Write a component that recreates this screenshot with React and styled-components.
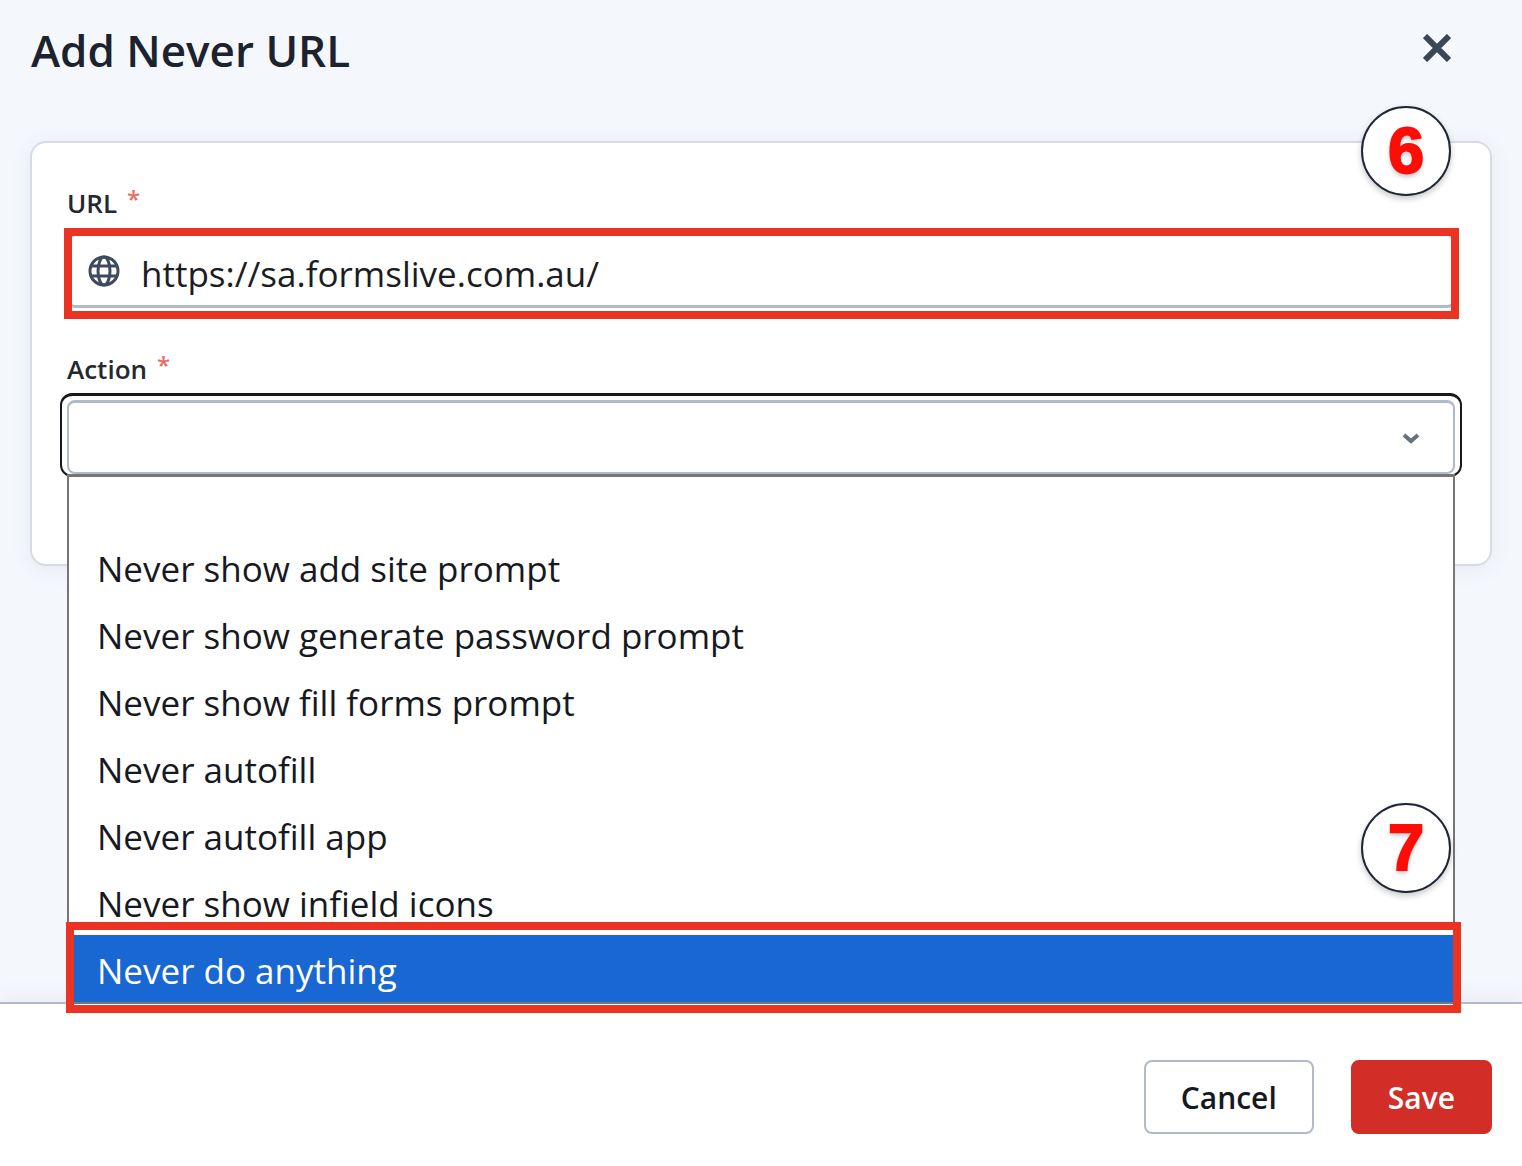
import React, { useState } from 'react';
import styled, { createGlobalStyle } from 'styled-components';

const GlobalStyle = createGlobalStyle`
  * {
    box-sizing: border-box;
  }
  body {
    margin: 0;
    background: #f4f7fc;
    color: #1a1d24;
    font-family: 'Open Sans', 'Noto Sans', sans-serif;
  }
  button, input, select {
    font-family: inherit;
    color: inherit;
  }
`;

const Dialog = styled.div`
  display: flex;
  flex-direction: column;
  min-height: 100vh;
`;

const Header = styled.header`
  display: flex;
  align-items: center;
  justify-content: space-between;
  height: 100px;
  padding: 0 63px 0 31px;
`;

const Title = styled.h1`
  margin: 0;
  font-size: 44px;
  font-weight: 600;
  line-height: 60px;
  color: #1c222e;
`;

const CloseButton = styled.button`
  display: flex;
  padding: 6px 8px 10px;
  border: none;
  background: none;
  color: #3b4656;
  cursor: pointer;
`;

const Main = styled.main`
  flex: 1;
  padding: 41px 30px 0;
`;

const Card = styled.section`
  position: relative;
  padding: 43px 35px 90px;
  border: 2px solid #d5dce5;
  border-radius: 16px;
  background: white;
  box-shadow: 0 3px 22px rgba(60, 80, 110, 0.07);
`;

const Field = styled.div`
  & + & {
    margin-top: 44px;
  }
`;

const Label = styled.label`
  display: block;
  margin-bottom: 14px;
  font-size: 26px;
  font-weight: 600;
  line-height: 34px;
  color: #24282f;
`;

const Required = styled.sup`
  margin-left: 10px;
  color: #f06a64;
  font-size: 24px;
  line-height: 0;
  vertical-align: 5px;
`;

const Control = styled.div`
  position: relative;
  display: flex;
  align-items: center;
  height: 74px;
  border: 2px solid #b0bac8;
  border-bottom-width: 3px;
  border-radius: 8px;
  background: white;
`;

const FocusedControl = styled(Control)`
  border-width: 3px 2px 2px;

  &::before {
    content: '';
    position: absolute;
    inset: -10px -9px -5px;
    border: 2px solid #16191f;
    border-top-width: 3px;
    border-radius: 12px;
    pointer-events: none;
  }
`;

const TextInput = styled.input`
  flex: 1;
  min-width: 0;
  padding: 6px 20px 0 21px;
  border: none;
  outline: none;
  background: transparent;
  font-size: 35px;
  line-height: 50px;
`;

const Select = styled.select`
  flex: 1;
  height: 100%;
  padding: 0 28px;
  border: none;
  outline: none;
  appearance: none;
  background: transparent;
  font-size: 35px;
`;

const GlobeIcon = styled.svg`
  flex: none;
  margin-left: 19px;
`;

const ChevronIcon = styled.svg`
  position: absolute;
  right: 32px;
  pointer-events: none;
`;

/* red frame that marks the step on the guide */
const Highlight = styled.span`
  position: absolute;
  inset: ${({ $inset }) => $inset};
  border: 8px solid #e93323;
  pointer-events: none;
`;

const Step = styled.span`
  position: absolute;
  top: ${({ $top }) => $top || 'auto'};
  bottom: ${({ $bottom }) => $bottom || 'auto'};
  right: ${({ $right }) => $right};
  display: flex;
  align-items: center;
  justify-content: center;
  width: 90px;
  height: 90px;
  border: 2px solid #1f2737;
  border-radius: 50%;
  background: white;
  box-shadow: 0 3px 6px rgba(0, 0, 0, 0.22);
  color: #ff0c06;
  font-family: 'Liberation Sans', Arial, sans-serif;
  font-size: 65px;
  font-weight: 700;
  line-height: 90px;
  -webkit-text-stroke: 2px #ff0c06;
  text-shadow: 0 3px 5px rgba(0, 0, 0, 0.25);
`;

const Menu = styled.ul`
  position: absolute;
  z-index: 1;
  top: calc(100% + 2px);
  left: -2px;
  right: -2px;
  margin: 0;
  padding: 0;
  border: 2px solid #767676;
  border-top-width: 3px;
  background: white;
  list-style: none;
`;

const Option = styled.li`
  position: relative;
  height: ${({ $blank }) => ($blank ? '56px' : '67px')};
  padding: 4px 28px 0;
  background: ${({ $active }) => ($active ? '#1967d2' : 'white')};
  color: ${({ $active }) => ($active ? 'white' : '#16191f')};
  font-size: 35px;
  line-height: 63px;
  cursor: default;
`;

const Footer = styled.footer`
  display: flex;
  justify-content: flex-end;
  gap: 37px;
  padding: 56px 30px 32px;
  border-top: 2px solid #b0bac8;
  background: white;
  box-shadow: 0 -3px 22px rgba(60, 80, 110, 0.07);
`;

const Button = styled.button`
  height: 74px;
  padding: 0 35px;
  border: 2px solid ${({ $primary }) => ($primary ? '#d32d27' : '#b0bac8')};
  border-radius: 8px;
  background: ${({ $primary }) => ($primary ? '#d32d27' : 'white')};
  color: ${({ $primary }) => ($primary ? 'white' : '#16191f')};
  font-size: 30px;
  font-weight: 600;
  cursor: pointer;
`;

const actions = [
  '',
  'Never show add site prompt',
  'Never show generate password prompt',
  'Never show fill forms prompt',
  'Never autofill',
  'Never autofill app',
  'Never show infield icons',
  'Never do anything',
];

const App = () => {
  const [url, setUrl] = useState('https://sa.formslive.com.au/');
  const [action, setAction] = useState('');
  const [hovered, setHovered] = useState('Never do anything');

  return (
    <Dialog>
      <GlobalStyle />
      <Header>
        <Title>Add Never URL</Title>
        <CloseButton type="button" aria-label="Close">
          <svg width="28" height="28" viewBox="0 0 28 28" fill="none">
            <path d="M2 2L26 26M26 2L2 26" stroke="currentColor" strokeWidth="6" />
          </svg>
        </CloseButton>
      </Header>
      <Main>
        <Card>
          <Field>
            <Label htmlFor="url">
              URL<Required>*</Required>
            </Label>
            <Control>
              <GlobeIcon
                width="32"
                height="32"
                viewBox="0 0 32 32"
                fill="none"
                stroke="#3f4b5c"
                strokeWidth="3"
              >
                <circle cx="16" cy="16" r="14" />
                <ellipse cx="16" cy="16" rx="6" ry="14" />
                <path d="M3 11H29M3 21H29" />
              </GlobeIcon>
              <TextInput
                id="url"
                type="text"
                value={url}
                onChange={e => setUrl(e.target.value)}
              />
              <Highlight $inset="-8px -6px -14px -5px" />
            </Control>
          </Field>
          <Field>
            <Label htmlFor="action">
              Action<Required>*</Required>
            </Label>
            <FocusedControl>
              <Select
                id="action"
                value={action}
                onChange={e => setAction(e.target.value)}
              >
                {actions.map(name => (
                  <option key={name} value={name}>
                    {name}
                  </option>
                ))}
              </Select>
              <ChevronIcon width="20" height="12" viewBox="0 0 20 12" fill="none">
                <path d="M3 3L10 9L17 3" stroke="#667080" strokeWidth="4" />
              </ChevronIcon>
              <Menu role="listbox" aria-label="Action">
                {actions.map(name => (
                  <Option
                    key={name}
                    role="option"
                    aria-selected={name === hovered}
                    $blank={!name}
                    $active={name === hovered}
                    onMouseEnter={() => setHovered(name)}
                    onClick={() => setAction(name)}
                  >
                    {name}
                    {name === 'Never do anything' && (
                      <Highlight $inset="-13px -8px -11px -3px" />
                    )}
                  </Option>
                ))}
                <Step $bottom="109px" $right="2px">
                  7
                </Step>
              </Menu>
            </FocusedControl>
          </Field>
          <Step $top="-37px" $right="39px">
            6
          </Step>
        </Card>
      </Main>
      <Footer>
        <Button type="button">Cancel</Button>
        <Button type="button" $primary>
          Save
        </Button>
      </Footer>
    </Dialog>
  );
};

export default App;
